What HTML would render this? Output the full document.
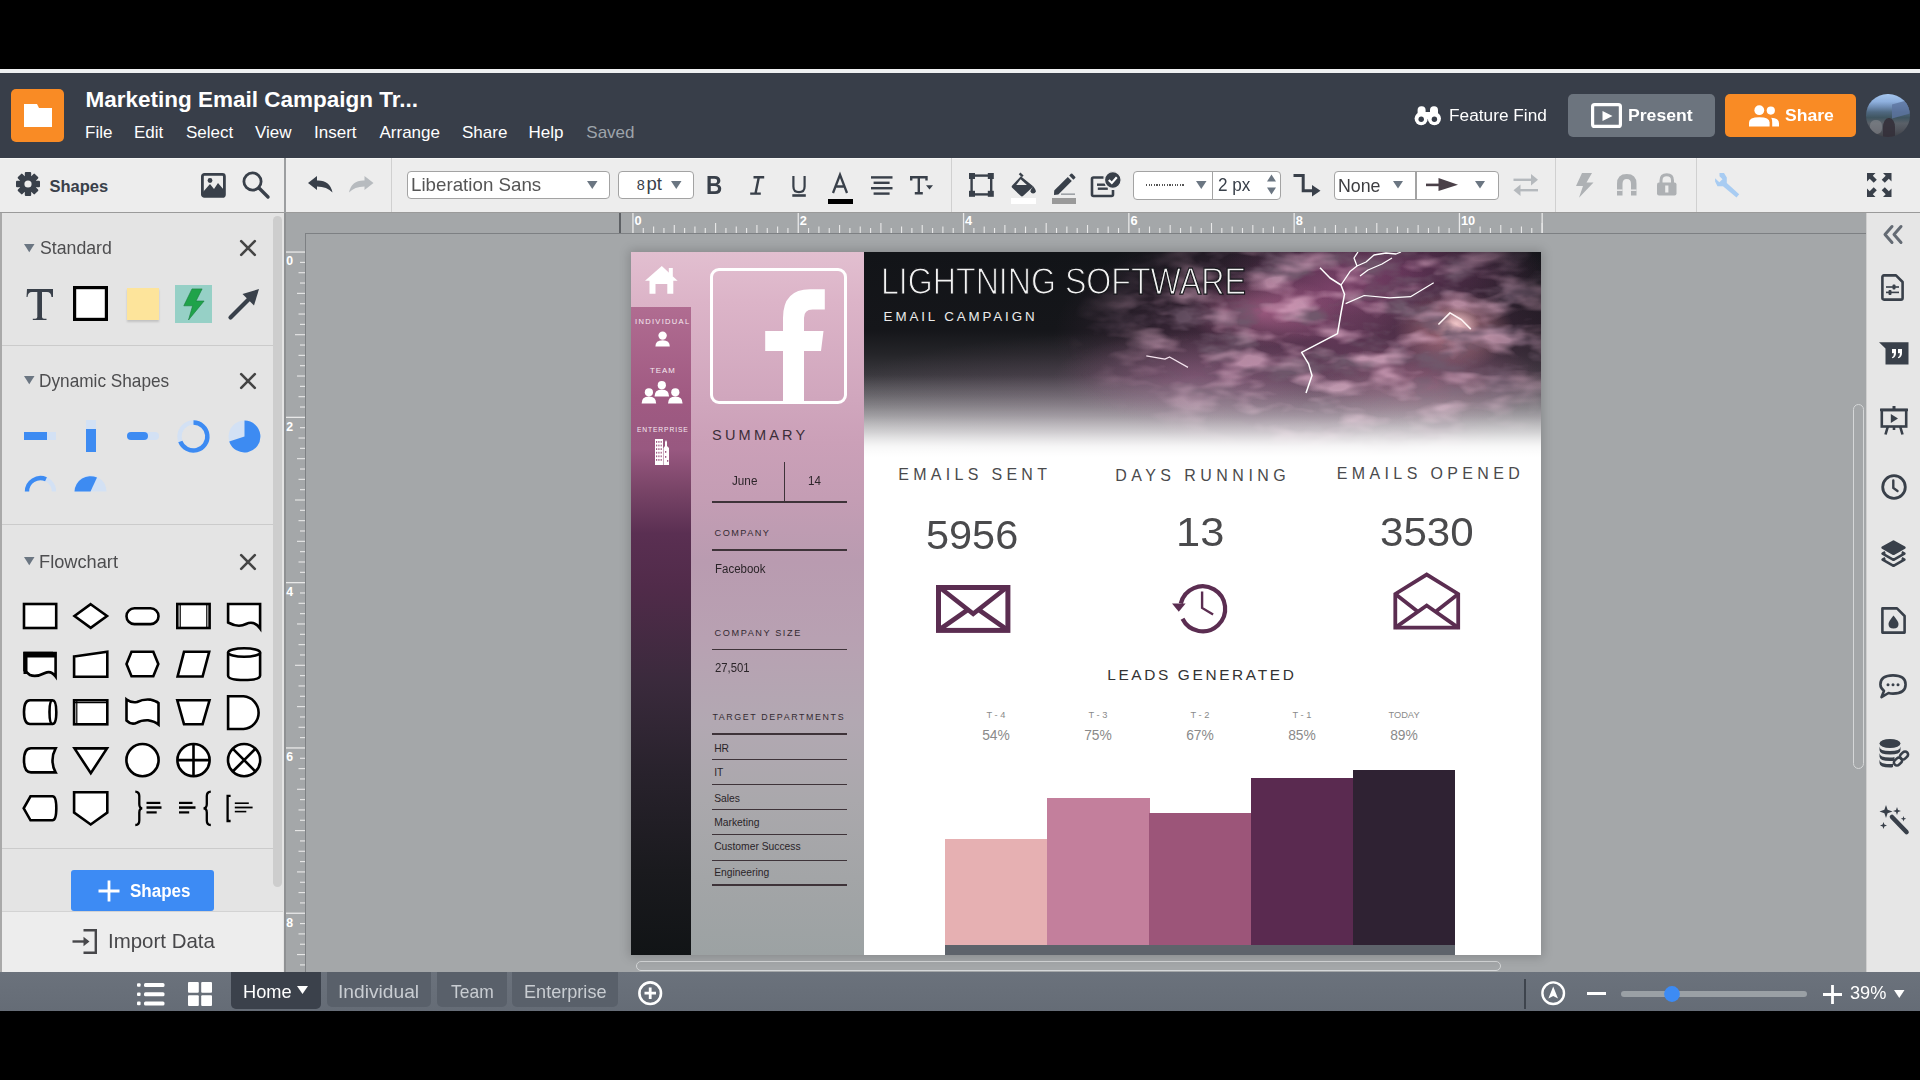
<!DOCTYPE html>
<html><head><meta charset="utf-8">
<style>
*{margin:0;padding:0;box-sizing:border-box}
html,body{width:1920px;height:1080px;overflow:hidden;background:#000;font-family:"Liberation Sans",sans-serif}
.a{position:absolute}
.t{position:absolute;white-space:nowrap;line-height:1}
svg{position:absolute;overflow:visible}
</style></head><body>
<!-- p_frame -->
<div class="a" style="left:0px;top:69px;width:1920px;height:4px;background:#eef0f1;"></div>
<div class="a" style="left:0px;top:73px;width:1920px;height:85px;background:#383e49;"></div>
<div class="a" style="left:0px;top:158px;width:1920px;height:55px;background:#ededed;border-top:1px solid #f6f6f6;border-bottom:1px solid #9a9a9a"></div>
<div class="a" style="left:0px;top:213px;width:285px;height:760px;background:#e4e4e4;border-left:2px solid #a9a9a9"></div>
<div class="a" style="left:284px;top:158px;width:2px;height:55px;background:#9c9ea0;"></div>
<div class="a" style="left:391px;top:158px;width:1px;height:54px;background:#d0d0d0;"></div>
<div class="a" style="left:951px;top:158px;width:1px;height:54px;background:#d0d0d0;"></div>
<div class="a" style="left:1555px;top:158px;width:1px;height:54px;background:#d0d0d0;"></div>
<div class="a" style="left:1696px;top:158px;width:1px;height:54px;background:#d0d0d0;"></div>
<div class="a" style="left:284px;top:213px;width:1582px;height:760px;background:#a4a7a9;border-left:2px solid #8f9193"></div>
<div class="a" style="left:1866px;top:213px;width:54px;height:760px;background:#e6e6e6;border-left:1px solid #cfcfcf"></div>
<div class="a" style="left:0px;top:972px;width:1920px;height:39px;background:linear-gradient(#6b727c,#656c76);"></div>
<!-- p_header -->
<div class="a" style="left:11px;top:89px;width:53px;height:53px;background:#f98b25;border-radius:5px"></div>
<svg style="left:24px;top:104px;" width="28" height="23" viewBox="0 0 28 23"><path d="M0 0H13L15 4H28V23H0Z" fill="#fff"/></svg>
<div class="t" style="left:85.50px;top:88.95px;font-size:22.5px;color:#fff;font-weight:bold;">Marketing Email Campaign Tr...</div>
<div class="t" style="left:85.00px;top:123.91px;font-size:17px;color:#fff;">File</div>
<div class="t" style="left:134.00px;top:123.91px;font-size:17px;color:#fff;">Edit</div>
<div class="t" style="left:186.00px;top:123.91px;font-size:17px;color:#fff;">Select</div>
<div class="t" style="left:255.00px;top:123.91px;font-size:17px;color:#fff;">View</div>
<div class="t" style="left:314.00px;top:123.91px;font-size:17px;color:#fff;">Insert</div>
<div class="t" style="left:379.50px;top:123.91px;font-size:17px;color:#fff;">Arrange</div>
<div class="t" style="left:462.00px;top:123.91px;font-size:17px;color:#fff;">Share</div>
<div class="t" style="left:528.50px;top:123.91px;font-size:17px;color:#fff;">Help</div>
<div class="t" style="left:586.30px;top:123.91px;font-size:17px;color:#9ea4ab;">Saved</div>
<svg style="left:1414px;top:106px;" width="28" height="20" viewBox="0 0 28 20"><g fill="#fff"><rect x="3.6" y="0.3" width="8" height="12" rx="3.8"/><rect x="16" y="0.3" width="8" height="12" rx="3.8"/><rect x="10" y="6" width="7.6" height="7"/>
<circle cx="7.2" cy="12.6" r="6.6"/><circle cx="20.4" cy="12.6" r="6.6"/></g>
<circle cx="7.2" cy="13.2" r="2.7" fill="#383e49"/><circle cx="20.4" cy="13.2" r="2.7" fill="#383e49"/></svg>
<div class="t" style="left:1449.42px;top:107.06px;font-size:17.3px;color:#fff;transform:scaleX(0.9991);transform-origin:left top;">Feature Find</div>
<div class="a" style="left:1568px;top:94px;width:147px;height:43px;background:#6c747e;border-radius:5px"></div>
<svg style="left:1591px;top:103px;" width="31" height="25" viewBox="0 0 31 25"><rect x="1.6" y="1.6" width="27.8" height="21.8" rx="2" fill="none" stroke="#fff" stroke-width="3.2"/><path d="M11.5 8V18L21.5 13Z" fill="#fff"/></svg>
<div class="t" style="left:1627.55px;top:107.06px;font-size:17.3px;color:#fff;font-weight:bold;transform:scaleX(1.0192);transform-origin:left top;">Present</div>
<div class="a" style="left:1725px;top:94px;width:131px;height:43px;background:#f98b25;border-radius:5px"></div>
<svg style="left:1749px;top:104px;" width="30" height="23" viewBox="0 0 30 23"><g fill="#fff"><circle cx="10.3" cy="6.2" r="4.9"/><path d="M0 22.5 V18.5 Q0 13.2 10.3 13.2 Q20.6 13.2 20.6 18.5 V22.5Z"/>
<circle cx="21.8" cy="6.6" r="4.1"/><path d="M22.3 13.8 Q30 14.3 30 19.2 V22.5 H23.2 V18.5 Q23.2 15.6 22.3 13.8Z"/></g></svg>
<div class="t" style="left:1784.97px;top:107.06px;font-size:17.3px;color:#fff;font-weight:bold;transform:scaleX(1.0177);transform-origin:left top;">Share</div>
<div class="a" style="left:1866px;top:93.5px;width:43.5px;height:43.5px;border-radius:50%;overflow:hidden;background:linear-gradient(#a6c6ee 0%,#8eb0de 18%,#6f8db4 30%,#4f6880 42%,#3f5560 55%,#5a6068 68%,#50545c 82%,#3e4046 100%)">
<div class="a" style="left:26px;top:8px;width:18px;height:14px;background:#5c74a0;opacity:.8;transform:skewY(-15deg)"></div>
<div class="a" style="left:4px;top:26px;width:12px;height:14px;border-radius:40%;background:#8a8d92;opacity:.55"></div>
<div class="a" style="left:17px;top:24px;width:12px;height:20px;border-radius:45% 45% 0 0;background:#34303a;opacity:.9"></div></div>
<!-- p_toolbar -->
<svg style="left:16px;top:172px;" width="24" height="24" viewBox="0 0 24 24"><g transform="translate(12 12)"><g fill="#39404a">
<rect x="-3.2" y="-12" width="6.4" height="24" rx="1"/>
<rect x="-3.2" y="-12" width="6.4" height="24" rx="1" transform="rotate(45)"/>
<rect x="-3.2" y="-12" width="6.4" height="24" rx="1" transform="rotate(90)"/>
<rect x="-3.2" y="-12" width="6.4" height="24" rx="1" transform="rotate(135)"/>
<circle r="8.6"/></g><circle r="3.6" fill="#ededed"/></g></svg>
<div class="t" style="left:49.50px;top:177.73px;font-size:16.5px;color:#39404a;font-weight:bold;">Shapes</div>
<svg style="left:201px;top:172.5px;" width="25" height="25" viewBox="0 0 25 25"><rect x="1.4" y="1.4" width="22" height="22" rx="2" fill="none" stroke="#39404a" stroke-width="2.8"/><circle cx="9" cy="7.5" r="2.4" fill="#39404a"/><path d="M2 23 L2 19 L9 11 L13 16 L17 10 L23 17 L23 23Z" fill="#39404a"/></svg>
<svg style="left:242px;top:171px;" width="28" height="28" viewBox="0 0 28 28"><circle cx="10.5" cy="10.5" r="8.6" fill="none" stroke="#39404a" stroke-width="2.8"/><path d="M17 17 L26 26" stroke="#39404a" stroke-width="3.4" stroke-linecap="round"/></svg>
<svg style="left:308px;top:176px;" width="25" height="17" viewBox="0 0 25 17"><path d="M0 7 L9 0 V4.5 Q22 4 24.5 16.5 Q19 10.5 9 10.5 V14 Z" fill="#39404a"/></svg>
<svg style="left:349px;top:176px;" width="25" height="17" viewBox="0 0 25 17"><path d="M24.5 7 L15.5 0 V4.5 Q2.5 4 0 16.5 Q5.5 10.5 15.5 10.5 V14 Z" fill="#b7bbbf"/></svg>
<div class="a" style="left:407px;top:171px;width:203px;height:28px;background:#fff;border:1.5px solid #a3a3a3;border-radius:4px"></div>
<div class="t" style="left:411.00px;top:174.72px;font-size:19px;color:#555;transform:scaleX(0.9864);transform-origin:left top;">Liberation Sans</div>
<svg style="left:586.5px;top:181px;" width="11" height="8" viewBox="0 0 11 8"><path d="M0 0H10.5L5.25 8Z" fill="#6b7682"/></svg>
<div class="a" style="left:618px;top:171px;width:76px;height:28px;background:#fff;border:1.5px solid #a3a3a3;border-radius:4px"></div>
<div class="t" style="left:636.80px;top:178.03px;font-size:14.5px;color:#39404a;">8</div>
<div class="t" style="left:646.50px;top:174.64px;font-size:18.5px;color:#39404a;">pt</div>
<svg style="left:671px;top:181px;" width="10.5" height="8" viewBox="0 0 10.5 8"><path d="M0 0H10.5L5.25 8Z" fill="#6b7682"/></svg>
<div class="t" style="left:706.00px;top:172.94px;font-size:25px;color:#39404a;font-weight:bold;transform:scaleX(0.9);transform-origin:left top;">B</div>
<svg style="left:750px;top:175.8px;" width="15" height="19" viewBox="0 0 15 19"><path d="M3.5 1.2H14.2M0.2 17.6H10.8M8.8 1.2 L5.5 17.6" stroke="#39404a" stroke-width="2.4" fill="none"/></svg>
<svg style="left:791.5px;top:176px;" width="15" height="21" viewBox="0 0 15 21"><path d="M1.4 0 V10.5 Q1.4 16.2 7 16.2 Q12.6 16.2 12.6 10.5 V0" stroke="#39404a" stroke-width="2.2" fill="none"/><rect x="0.3" y="18.2" width="13.5" height="2.6" fill="#39404a"/></svg>
<svg style="left:831.5px;top:174.2px;" width="17" height="19" viewBox="0 0 17 19"><path d="M1 19 L8 0.8 L15 19 M3.8 12.5 H12.2" stroke="#39404a" stroke-width="2.3" fill="none"/></svg>
<div class="a" style="left:828px;top:198.6px;width:24.5px;height:5px;background:#000;"></div>
<svg style="left:870.5px;top:175.5px;" width="22" height="19" viewBox="0 0 22 19"><g fill="#39404a"><rect x="0" y="0.2" width="21.5" height="2.4"/><rect x="2.6" y="5.6" width="16" height="2.4"/><rect x="0" y="11" width="21.5" height="2.4"/><rect x="2.6" y="16.4" width="16" height="2.4"/></g></svg>
<svg style="left:909.5px;top:175.8px;" width="24" height="19" viewBox="0 0 24 19"><path d="M1.2 1.2 H16.5 M1.2 0 V4.5 M16.5 0 V4.5 M8.8 1.2 V17.2 M4.8 17.2 H12.8" stroke="#39404a" stroke-width="2.4" fill="none"/><path d="M16 9.2 H23 L19.5 13.6Z" fill="#39404a"/></svg>
<svg style="left:969px;top:173px;" width="25" height="24" viewBox="0 0 25 24"><rect x="2.6" y="2.6" width="19.6" height="18.8" fill="none" stroke="#39404a" stroke-width="2.4"/><g fill="#39404a"><rect x="0" y="0" width="6" height="6"/><rect x="18.8" y="0" width="6" height="6"/><rect x="0" y="17.8" width="6" height="6"/><rect x="18.8" y="17.8" width="6" height="6"/></g></svg>
<svg style="left:1010.5px;top:173px;" width="26" height="24" viewBox="0 0 26 24"><path d="M9.8 3.2 L21.5 12.8 Q22.3 13.5 21.5 14.3 L12.3 22.8 Q11 24 9.6 22.8 L1.2 14.8 Q0.1 13.6 1.2 12.5 Z" fill="#39404a"/><path d="M8.6 0.4 L11.8 3.4" stroke="#39404a" stroke-width="2.4"/><path d="M5.2 12 L9.6 6.3 L15.9 12Z" fill="#ededed"/><path d="M22.1 13.2 Q25.2 17.2 24.8 18.6 Q24.2 20.6 22.1 20.6 Q20 20.6 19.5 18.6 Q19.2 17.2 22.1 13.2Z" fill="#39404a"/></svg>
<div class="a" style="left:1011px;top:198.2px;width:24.5px;height:5.6px;background:#fff;"></div>
<svg style="left:1052.5px;top:173.5px;" width="24" height="22" viewBox="0 0 24 22"><path d="M1 21 L1.2 16.5 L14.8 2.9 L18.8 6.9 L5.3 20.5 Z" fill="#39404a"/><path d="M16.2 1.5 L17.9 -0.2 Q18.6 -0.8 19.3 -0.2 L22.2 2.7 Q22.8 3.4 22.2 4.1 L20.4 5.8 Z" fill="#39404a"/><rect x="8" y="19.5" width="14" height="1.3" fill="#8a8f95"/></svg>
<div class="a" style="left:1052px;top:198.2px;width:24px;height:5.6px;background:#9a9a9a;"></div>
<svg style="left:1090.5px;top:171px;" width="31" height="27" viewBox="0 0 31 27"><path d="M12.5 6.5 H2.5 Q1 6.5 1 8 V23.5 Q1 25 2.5 25 H20.5 Q22 25 22 23.5 V19" fill="none" stroke="#39404a" stroke-width="2.6"/><rect x="6" y="12.5" width="8.5" height="2.4" fill="#39404a"/><rect x="6.8" y="16.5" width="10" height="2.4" fill="#39404a"/><circle cx="21.8" cy="9" r="8.4" fill="#39404a" stroke="#ededed" stroke-width="1.4"/><path d="M17.8 9 L20.8 12 L25.8 6.2" stroke="#fff" stroke-width="2.2" fill="none"/></svg>
<div class="a" style="left:1132.5px;top:170.5px;width:148px;height:29px;background:#fff;border:1.5px solid #a3a3a3;border-radius:4px"></div>
<div class="a" style="left:1211.5px;top:171px;width:1px;height:28px;background:#a3a3a3;"></div>
<div class="a" style="left:1146px;top:184px;width:38.5px;height:2px;background:repeating-linear-gradient(90deg,#555 0 1.2px,transparent 1.2px 2.6px);"></div>
<svg style="left:1196px;top:181px;" width="10.5" height="8" viewBox="0 0 10.5 8"><path d="M0 0H10.5L5.25 8Z" fill="#6b7682"/></svg>
<div class="t" style="left:1218.14px;top:175.74px;font-size:18.5px;color:#39404a;transform:scaleX(0.9275);transform-origin:left top;">2 px</div>
<svg style="left:1266.5px;top:174px;" width="9" height="21" viewBox="0 0 9 21"><path d="M0 7.5H9L4.5 0.5Z M0 13.5H9L4.5 20.5Z" fill="#6b7682"/></svg>
<svg style="left:1293px;top:173.5px;" width="29" height="23" viewBox="0 0 29 23"><path d="M0.5 1.6 H10.2 V16.8 H20" fill="none" stroke="#39404a" stroke-width="3"/><path d="M19 11 L27.5 16.8 L19 22.5Z" fill="#39404a"/></svg>
<div class="a" style="left:1334px;top:171px;width:164.5px;height:28.5px;background:#fff;border:1.5px solid #a3a3a3;border-radius:4px"></div>
<div class="a" style="left:1415px;top:171px;width:1.5px;height:28.5px;background:#a3a3a3;"></div>
<div class="t" style="left:1338.38px;top:177.53px;font-size:17.8px;color:#3d3d40;transform:scaleX(0.9996);transform-origin:left top;">None</div>
<svg style="left:1392.5px;top:181.2px;" width="10" height="7.5" viewBox="0 0 10 7.5"><path d="M0 0H10L5 7.5Z" fill="#6b7682"/></svg>
<svg style="left:1425.5px;top:178.4px;" width="33" height="13" viewBox="0 0 33 13"><rect x="0" y="5.6" width="16" height="2.6" fill="#4a4048"/><path d="M12.5 0 L32 6.7 L12.5 13 Z" fill="#4a4048"/></svg>
<svg style="left:1474.8px;top:181.2px;" width="10" height="7.5" viewBox="0 0 10 7.5"><path d="M0 0H10L5 7.5Z" fill="#6b7682"/></svg>
<svg style="left:1512.5px;top:174px;" width="26" height="22" viewBox="0 0 26 22"><g fill="#b5b9bd"><rect x="0.5" y="4.6" width="20" height="2.4"/><path d="M18 0 L25 5.8 L18 11.6Z"/><rect x="4.5" y="15" width="20.5" height="2.4"/><path d="M7.5 10.4 L0.5 16.2 L7.5 22Z"/></g></svg>
<svg style="left:1576px;top:173px;" width="18" height="25" viewBox="0 0 18 25"><path d="M6 0 H16 L10.5 9.5 H17.5 L3 24.8 L7 13 H0 Z" fill="#aeb1b4"/></svg>
<svg style="left:1617px;top:174px;" width="19.5" height="22" viewBox="0 0 19.5 22"><path d="M0 9.8 Q0 0 9.75 0 Q19.5 0 19.5 9.8 V21.5 H14 V10 Q14 5 9.75 5 Q5.5 5 5.5 10 V21.5 H0 Z" fill="#aeb1b4"/><rect x="0" y="15.5" width="5.5" height="1.4" fill="#ededed"/><rect x="14" y="15.5" width="5.5" height="1.4" fill="#ededed"/></svg>
<svg style="left:1657px;top:174px;" width="19.5" height="22" viewBox="0 0 19.5 22"><path d="M4 9 V6.5 Q4 0.8 9.75 0.8 Q15.5 0.8 15.5 6.5 V9" fill="none" stroke="#aeb1b4" stroke-width="3"/><rect x="0" y="8.5" width="19.5" height="13" rx="2" fill="#aeb1b4"/><rect x="8.2" y="11.5" width="3.2" height="7" fill="#ededed"/></svg>
<svg style="left:1713.5px;top:173px;" width="26" height="25" viewBox="0 0 26 25"><path d="M5.5 0.0 L10.0 0.0 L12.8 4.5 L12.8 10.0 L25.2 21.2 L22.5 24.5 L9.0 13.3 L3.5 13.3 L1.1 8.5 L1.1 5.3 L5.3 9.3 L8.5 6.3 L5.5 3.2Z" fill="#a8ccf2"/></svg>
<svg style="left:1866.5px;top:173px;" width="24.5" height="24" viewBox="0 0 24.5 24"><g fill="#39404a"><path d="M0 0 H8.5 L5.8 2.7 L9.8 6.7 L6.7 9.8 L2.7 5.8 L0 8.5Z"/>
<path d="M24.5 0 H16 L18.7 2.7 L14.7 6.7 L17.8 9.8 L21.8 5.8 L24.5 8.5Z"/>
<path d="M0 24 H8.5 L5.8 21.3 L9.8 17.3 L6.7 14.2 L2.7 18.2 L0 15.5Z"/>
<path d="M24.5 24 H16 L18.7 21.3 L14.7 17.3 L17.8 14.2 L21.8 18.2 L24.5 15.5Z"/></g></svg>
<!-- p_left -->
<div class="a" style="left:273px;top:216px;width:9px;height:671px;background:#cdcdcd;border-radius:4.5px"></div>
<svg style="left:24px;top:243.5px;" width="11" height="8.5" viewBox="0 0 11 8.5"><path d="M0 0H10.5L5.25 8.2Z" fill="#6b7682"/></svg>
<div class="t" style="left:39.80px;top:240.33px;font-size:17.8px;color:#4d4d4f;transform:scaleX(0.9956);transform-origin:left top;">Standard</div>
<svg style="left:240px;top:240.20000000000002px;" width="16" height="16" viewBox="0 0 16 16"><path d="M1.2 1.2 L14.8 14.8 M14.8 1.2 L1.2 14.8" stroke="#444" stroke-width="2.6" stroke-linecap="round"/></svg>
<svg style="left:26px;top:287.5px;" width="28" height="33" viewBox="0 0 28 33"><path d="M1 1 H27 V9 H25.5 Q25 4 21 4 H16 V29 Q16 30.8 18 30.8 H20.5 V32 H6.8 V30.8 H9.3 Q11.3 30.8 11.3 29 V4 H6 Q2 4 1.5 9 H0.5Z" fill="#39404a"/></svg>
<svg style="left:73px;top:286px;" width="35" height="35" viewBox="0 0 35 35"><rect x="1.6" y="1.6" width="31.8" height="31.8" fill="#fff" stroke="#000" stroke-width="3.2"/></svg>
<div class="a" style="left:127px;top:288px;width:32px;height:32px;background:#fde49b;box-shadow:0 2px 2px rgba(0,0,0,.15)"></div>
<div class="a" style="left:174.5px;top:285px;width:37.5px;height:38px;background:#96d0c6;"></div>
<svg style="left:174.5px;top:285px;" width="37.5" height="38" viewBox="0 0 37.5 38"><path d="M17 3.9 H27.1 L21 16 H29.1 L13.5 35 L17.6 20.8 H8.8 Z" fill="#1fa34a" stroke="#177c3c" stroke-width="0.6"/></svg>
<svg style="left:228px;top:288px;" width="32" height="32" viewBox="0 0 32 32"><path d="M2.5 29.5 L21 11" stroke="#39404a" stroke-width="4.2" stroke-linecap="round"/><path d="M31 1 L14.5 6 L26 17.5Z" fill="#39404a"/></svg>
<div class="a" style="left:2px;top:345px;width:271px;height:1px;background:#cbcbcb;"></div>
<svg style="left:24px;top:375.5px;" width="11" height="8.5" viewBox="0 0 11 8.5"><path d="M0 0H10.5L5.25 8.2Z" fill="#6b7682"/></svg>
<div class="t" style="left:39.22px;top:372.93px;font-size:17.8px;color:#4d4d4f;transform:scaleX(0.9689);transform-origin:left top;">Dynamic Shapes</div>
<svg style="left:240px;top:372.8px;" width="16" height="16" viewBox="0 0 16 16"><path d="M1.2 1.2 L14.8 14.8 M14.8 1.2 L1.2 14.8" stroke="#444" stroke-width="2.6" stroke-linecap="round"/></svg>
<div class="a" style="left:23.7px;top:432px;width:23px;height:8px;background:#3d8bf2;"></div>
<div class="a" style="left:46.7px;top:432px;width:9.6px;height:8px;background:#d3e1f4;"></div>
<div class="a" style="left:86px;top:420px;width:9.5px;height:9px;background:#d3e1f4;"></div>
<div class="a" style="left:86px;top:429px;width:9.5px;height:22.6px;background:#3d8bf2;"></div>
<svg style="left:127px;top:432px;" width="32" height="8" viewBox="0 0 32 8"><rect x="0" y="0" width="32" height="8" rx="4" fill="#d3e1f4"/><rect x="0" y="0" width="21" height="8" rx="4" fill="#3d8bf2"/></svg>
<svg style="left:177px;top:420px;" width="33" height="33" viewBox="0 0 33 33"><circle cx="16.5" cy="16.5" r="14" fill="none" stroke="#d3e1f4" stroke-width="4.4"/><path d="M16.5 2.5 A14 14 0 1 1 3.3 21.5" fill="none" stroke="#3d8bf2" stroke-width="4.4"/></svg>
<svg style="left:228px;top:420px;" width="33" height="33" viewBox="0 0 33 33"><circle cx="16.5" cy="16.5" r="16" fill="#d3e1f4"/><path d="M16.5 16.5 V0.5 A16 16 0 1 1 1.2 21.5Z" fill="#3d8bf2"/></svg>
<svg style="left:23.7px;top:476px;" width="33" height="16" viewBox="0 0 33 16"><path d="M3 15.5 A13.5 13.5 0 0 1 30 15.5" fill="none" stroke="#d3e1f4" stroke-width="4.4"/><path d="M3 15.5 A13.5 13.5 0 0 1 22 3.3" fill="none" stroke="#3d8bf2" stroke-width="4.4"/></svg>
<svg style="left:74px;top:476px;" width="33" height="16" viewBox="0 0 33 16"><path d="M0.5 15.5 A16 16 0 0 1 32.5 15.5Z" fill="#d3e1f4"/><path d="M0.5 15.5 A16 16 0 0 1 23 1.6 L16.5 15.5Z" fill="#3d8bf2"/></svg>
<div class="a" style="left:2px;top:524px;width:271px;height:1px;background:#cbcbcb;"></div>
<svg style="left:24px;top:556.5px;" width="11" height="8.5" viewBox="0 0 11 8.5"><path d="M0 0H10.5L5.25 8.2Z" fill="#6b7682"/></svg>
<div class="t" style="left:39.14px;top:553.93px;font-size:17.8px;color:#4d4d4f;transform:scaleX(1.0243);transform-origin:left top;">Flowchart</div>
<svg style="left:240px;top:553.8px;" width="16" height="16" viewBox="0 0 16 16"><path d="M1.2 1.2 L14.8 14.8 M14.8 1.2 L1.2 14.8" stroke="#444" stroke-width="2.6" stroke-linecap="round"/></svg>
<svg style="left:0;top:0" width="300" height="900" viewBox="0 0 300 900"><g fill="#fff" stroke="#000" stroke-width="2.6" stroke-linejoin="miter"><rect x="24" y="604" width="32.2" height="24"/><path d="M90.7 604.2 L107 616 L90.7 627.8 L74.5 616Z"/><rect x="126.5" y="608.3" width="32" height="15.8" rx="7.9"/><rect x="177.3" y="604" width="32.3" height="24"/><path d="M180.2 604 V628 M206.8 604 V628" stroke-width="1.2"/><path d="M228.1 604 H260.1 V628.5 Q254 620 246 624 Q238 628 228.1 622.5Z"/><path d="M24.5 653 H55.6 V676.5 Q51 670 45 673 Q36 677.5 30 675 L24.5 670.5Z"/><path d="M23.5 651.8 H53 L56 655 V657.5 H27.5 V674 H23.5Z" fill="#000" stroke="none"/><path d="M74.1 656.5 L107.3 651.8 V676.7 H74.1Z"/><path d="M131.5 651.8 H153.3 L158.3 664 L153.3 676.3 H131.5 L126.5 664Z"/><path d="M184 651.8 H209.2 L202.6 676.5 H177.6Z"/><path d="M228.1 652.5 V675.5 Q228.1 680 244.1 680 Q260.1 680 260.1 675.5 V652.5"/><ellipse cx="244.1" cy="652.5" rx="16" ry="4.3"/><path d="M30 700.2 H52.5 Q56.3 700.2 56.3 712 Q56.3 724 52.5 724 H30 Q24 724 24 712 Q24 700.2 30 700.2Z"/><path d="M52.5 700.2 Q49.5 700.2 49.5 712 Q49.5 724 52.5 724" fill="none"/><rect x="74.1" y="700.3" width="33.2" height="24"/><path d="M76.8 700.3 V724 M74.1 702.6 H107.3" stroke-width="1.2" fill="none"/><path d="M126.5 699.5 Q131 703 137 702 Q143 699 150 699.6 Q156 701 158.5 703 V724.5 Q155 721.5 148 720.2 Q141 720 137 722.6 Q131.5 725.5 126.5 720.5Z"/><path d="M177.3 700.3 H209.5 L202.6 724.2 H184Z"/><path d="M228.1 696.3 H243.5 A16.4 16.4 0 0 1 243.5 729 H228.1Z"/><path d="M31 748.3 H55.6 Q52.5 754 52.5 760.3 Q52.5 767 55.6 772.4 H31 Q24 772.4 24 760.3 Q24 748.3 31 748.3Z"/><path d="M74.5 748.4 H107 L90.8 773.2Z"/><circle cx="142.5" cy="760.1" r="16.1"/><circle cx="193.5" cy="760.1" r="16.1"/><path d="M193.5 744 V776.2 M177.4 760.1 H209.6" fill="none"/><circle cx="244.1" cy="760.1" r="16.1"/><path d="M232.7 748.7 L255.5 771.5 M255.5 748.7 L232.7 771.5" fill="none"/><path d="M30.5 796.3 H52.5 Q56.3 796.3 56.3 808.3 Q56.3 820.3 52.5 820.3 H30.5 L23.7 808.3Z"/><path d="M74.1 792.3 H107.3 V812.5 L90.7 824.5 L74.1 812.5Z"/></g><g fill="none" stroke="#000" stroke-width="2.3"><path d="M135.3 791.6 Q139.3 791.8 139.3 796 V804 Q139.3 808.3 142.3 808.3 Q139.3 808.3 139.3 812.6 V820.5 Q139.3 825 135.3 825"/><path d="M210.8 791.6 Q206.8 791.8 206.8 796 V804 Q206.8 808.3 203.5 808.3 Q206.8 808.3 206.8 812.6 V820.5 Q206.8 825 210.8 825"/><path d="M230.6 795.8 H227.6 V821 H230.6"/></g><g fill="#000"><rect x="146.5" y="801.8" width="13.8" height="2.2"/><rect x="146.5" y="806.3" width="15" height="2.5"/><rect x="146.5" y="811.3" width="10.2" height="2.2"/><rect x="179" y="801.8" width="13.5" height="2.2"/><rect x="179" y="806.3" width="16.5" height="2.5"/><rect x="179" y="811.3" width="10.2" height="2.2"/><rect x="234.8" y="802.4" width="14" height="1.6"/><rect x="234.8" y="806.6" width="17.8" height="1.8"/><rect x="234.8" y="810.8" width="11.5" height="1.6"/></g></svg>
<div class="a" style="left:2px;top:848px;width:271px;height:1px;background:#cbcbcb;"></div>
<div class="a" style="left:71px;top:870px;width:142.5px;height:40.5px;background:#3d8bf4;border-radius:3px"></div>
<svg style="left:98px;top:880px;" width="22" height="22" viewBox="0 0 22 22"><path d="M11 0.5 V21.5 M0.5 11 H21.5" stroke="#fff" stroke-width="2.8"/></svg>
<div class="t" style="left:130.49px;top:882.69px;font-size:17.5px;color:#fff;font-weight:bold;transform:scaleX(0.9723);transform-origin:left top;">Shapes</div>
<div class="a" style="left:2px;top:911px;width:281px;height:61px;background:#ededed;border-top:1px solid #d3d3d3"></div>
<svg style="left:71.5px;top:929px;" width="26" height="25" viewBox="0 0 26 25"><path d="M11.5 1.2 H23.8 V23.8 H11.5" fill="none" stroke="#47474a" stroke-width="2.4"/><path d="M0.5 12.5 H16" stroke="#47474a" stroke-width="2.4"/><path d="M11.5 7.8 L17.5 12.5 L11.5 17.2Z" fill="#47474a"/></svg>
<div class="t" style="left:107.56px;top:930.22px;font-size:21px;color:#47474a;transform:scaleX(0.9737);transform-origin:left top;">Import Data</div>
<!-- p_canvas -->
<div class="a" style="left:305px;top:232.5px;width:1561px;height:1.5px;background:#7d8083;"></div>
<div class="a" style="left:304.5px;top:233px;width:1.5px;height:740px;background:#7d8083;"></div>
<div class="a" style="left:619px;top:213px;width:1.6px;height:20px;background:#5d6064;"></div>
<svg style="left:0;top:0" width="1920" height="1080" viewBox="0 0 1920 1080"><rect x="632.30" y="213" width="1.3" height="20" fill="#e8e8e8"/><rect x="642.73" y="228" width="1.1" height="5" fill="#e8e8e8"/><rect x="653.06" y="226.5" width="1.1" height="6.5" fill="#e8e8e8"/><rect x="663.39" y="228" width="1.1" height="5" fill="#e8e8e8"/><rect x="673.73" y="225" width="1.1" height="8" fill="#e8e8e8"/><rect x="684.06" y="228" width="1.1" height="5" fill="#e8e8e8"/><rect x="694.39" y="226.5" width="1.1" height="6.5" fill="#e8e8e8"/><rect x="704.72" y="228" width="1.1" height="5" fill="#e8e8e8"/><rect x="715.05" y="223" width="1.1" height="10" fill="#e8e8e8"/><rect x="725.38" y="228" width="1.1" height="5" fill="#e8e8e8"/><rect x="735.71" y="226.5" width="1.1" height="6.5" fill="#e8e8e8"/><rect x="746.04" y="228" width="1.1" height="5" fill="#e8e8e8"/><rect x="756.38" y="225" width="1.1" height="8" fill="#e8e8e8"/><rect x="766.71" y="228" width="1.1" height="5" fill="#e8e8e8"/><rect x="777.04" y="226.5" width="1.1" height="6.5" fill="#e8e8e8"/><rect x="787.37" y="228" width="1.1" height="5" fill="#e8e8e8"/><rect x="797.60" y="213" width="1.3" height="20" fill="#e8e8e8"/><rect x="808.03" y="228" width="1.1" height="5" fill="#e8e8e8"/><rect x="818.36" y="226.5" width="1.1" height="6.5" fill="#e8e8e8"/><rect x="828.69" y="228" width="1.1" height="5" fill="#e8e8e8"/><rect x="839.02" y="225" width="1.1" height="8" fill="#e8e8e8"/><rect x="849.36" y="228" width="1.1" height="5" fill="#e8e8e8"/><rect x="859.69" y="226.5" width="1.1" height="6.5" fill="#e8e8e8"/><rect x="870.02" y="228" width="1.1" height="5" fill="#e8e8e8"/><rect x="880.35" y="223" width="1.1" height="10" fill="#e8e8e8"/><rect x="890.68" y="228" width="1.1" height="5" fill="#e8e8e8"/><rect x="901.01" y="226.5" width="1.1" height="6.5" fill="#e8e8e8"/><rect x="911.34" y="228" width="1.1" height="5" fill="#e8e8e8"/><rect x="921.67" y="225" width="1.1" height="8" fill="#e8e8e8"/><rect x="932.01" y="228" width="1.1" height="5" fill="#e8e8e8"/><rect x="942.34" y="226.5" width="1.1" height="6.5" fill="#e8e8e8"/><rect x="952.67" y="228" width="1.1" height="5" fill="#e8e8e8"/><rect x="962.90" y="213" width="1.3" height="20" fill="#e8e8e8"/><rect x="973.33" y="228" width="1.1" height="5" fill="#e8e8e8"/><rect x="983.66" y="226.5" width="1.1" height="6.5" fill="#e8e8e8"/><rect x="993.99" y="228" width="1.1" height="5" fill="#e8e8e8"/><rect x="1004.33" y="225" width="1.1" height="8" fill="#e8e8e8"/><rect x="1014.66" y="228" width="1.1" height="5" fill="#e8e8e8"/><rect x="1024.99" y="226.5" width="1.1" height="6.5" fill="#e8e8e8"/><rect x="1035.32" y="228" width="1.1" height="5" fill="#e8e8e8"/><rect x="1045.65" y="223" width="1.1" height="10" fill="#e8e8e8"/><rect x="1055.98" y="228" width="1.1" height="5" fill="#e8e8e8"/><rect x="1066.31" y="226.5" width="1.1" height="6.5" fill="#e8e8e8"/><rect x="1076.64" y="228" width="1.1" height="5" fill="#e8e8e8"/><rect x="1086.97" y="225" width="1.1" height="8" fill="#e8e8e8"/><rect x="1097.31" y="228" width="1.1" height="5" fill="#e8e8e8"/><rect x="1107.64" y="226.5" width="1.1" height="6.5" fill="#e8e8e8"/><rect x="1117.97" y="228" width="1.1" height="5" fill="#e8e8e8"/><rect x="1128.20" y="213" width="1.3" height="20" fill="#e8e8e8"/><rect x="1138.63" y="228" width="1.1" height="5" fill="#e8e8e8"/><rect x="1148.96" y="226.5" width="1.1" height="6.5" fill="#e8e8e8"/><rect x="1159.29" y="228" width="1.1" height="5" fill="#e8e8e8"/><rect x="1169.62" y="225" width="1.1" height="8" fill="#e8e8e8"/><rect x="1179.96" y="228" width="1.1" height="5" fill="#e8e8e8"/><rect x="1190.29" y="226.5" width="1.1" height="6.5" fill="#e8e8e8"/><rect x="1200.62" y="228" width="1.1" height="5" fill="#e8e8e8"/><rect x="1210.95" y="223" width="1.1" height="10" fill="#e8e8e8"/><rect x="1221.28" y="228" width="1.1" height="5" fill="#e8e8e8"/><rect x="1231.61" y="226.5" width="1.1" height="6.5" fill="#e8e8e8"/><rect x="1241.94" y="228" width="1.1" height="5" fill="#e8e8e8"/><rect x="1252.28" y="225" width="1.1" height="8" fill="#e8e8e8"/><rect x="1262.61" y="228" width="1.1" height="5" fill="#e8e8e8"/><rect x="1272.94" y="226.5" width="1.1" height="6.5" fill="#e8e8e8"/><rect x="1283.27" y="228" width="1.1" height="5" fill="#e8e8e8"/><rect x="1293.50" y="213" width="1.3" height="20" fill="#e8e8e8"/><rect x="1303.93" y="228" width="1.1" height="5" fill="#e8e8e8"/><rect x="1314.26" y="226.5" width="1.1" height="6.5" fill="#e8e8e8"/><rect x="1324.59" y="228" width="1.1" height="5" fill="#e8e8e8"/><rect x="1334.93" y="225" width="1.1" height="8" fill="#e8e8e8"/><rect x="1345.26" y="228" width="1.1" height="5" fill="#e8e8e8"/><rect x="1355.59" y="226.5" width="1.1" height="6.5" fill="#e8e8e8"/><rect x="1365.92" y="228" width="1.1" height="5" fill="#e8e8e8"/><rect x="1376.25" y="223" width="1.1" height="10" fill="#e8e8e8"/><rect x="1386.58" y="228" width="1.1" height="5" fill="#e8e8e8"/><rect x="1396.91" y="226.5" width="1.1" height="6.5" fill="#e8e8e8"/><rect x="1407.24" y="228" width="1.1" height="5" fill="#e8e8e8"/><rect x="1417.58" y="225" width="1.1" height="8" fill="#e8e8e8"/><rect x="1427.91" y="228" width="1.1" height="5" fill="#e8e8e8"/><rect x="1438.24" y="226.5" width="1.1" height="6.5" fill="#e8e8e8"/><rect x="1448.57" y="228" width="1.1" height="5" fill="#e8e8e8"/><rect x="1458.80" y="213" width="1.3" height="20" fill="#e8e8e8"/><rect x="1469.23" y="228" width="1.1" height="5" fill="#e8e8e8"/><rect x="1479.56" y="226.5" width="1.1" height="6.5" fill="#e8e8e8"/><rect x="1489.89" y="228" width="1.1" height="5" fill="#e8e8e8"/><rect x="1500.22" y="225" width="1.1" height="8" fill="#e8e8e8"/><rect x="1510.56" y="228" width="1.1" height="5" fill="#e8e8e8"/><rect x="1520.89" y="226.5" width="1.1" height="6.5" fill="#e8e8e8"/><rect x="1531.22" y="228" width="1.1" height="5" fill="#e8e8e8"/><rect x="1541.55" y="223" width="1.1" height="10" fill="#e8e8e8"/><rect x="1541.5" y="213" width="1.3" height="20" fill="#e8e8e8"/><text x="634.50" y="224.7" font-size="12.8" font-weight="bold" fill="#fff" font-family="Liberation Sans">0</text><text x="799.80" y="224.7" font-size="12.8" font-weight="bold" fill="#fff" font-family="Liberation Sans">2</text><text x="965.10" y="224.7" font-size="12.8" font-weight="bold" fill="#fff" font-family="Liberation Sans">4</text><text x="1130.40" y="224.7" font-size="12.8" font-weight="bold" fill="#fff" font-family="Liberation Sans">6</text><text x="1295.70" y="224.7" font-size="12.8" font-weight="bold" fill="#fff" font-family="Liberation Sans">8</text><text x="1461.00" y="224.7" font-size="12.8" font-weight="bold" fill="#fff" font-family="Liberation Sans">10</text><rect x="286" y="251.40" width="19" height="1.3" fill="#e8e8e8"/><rect x="300" y="261.83" width="5" height="1.1" fill="#e8e8e8"/><rect x="298.5" y="272.16" width="6.5" height="1.1" fill="#e8e8e8"/><rect x="300" y="282.49" width="5" height="1.1" fill="#e8e8e8"/><rect x="297" y="292.82" width="8" height="1.1" fill="#e8e8e8"/><rect x="300" y="303.16" width="5" height="1.1" fill="#e8e8e8"/><rect x="298.5" y="313.49" width="6.5" height="1.1" fill="#e8e8e8"/><rect x="300" y="323.82" width="5" height="1.1" fill="#e8e8e8"/><rect x="295" y="334.15" width="10" height="1.1" fill="#e8e8e8"/><rect x="300" y="344.48" width="5" height="1.1" fill="#e8e8e8"/><rect x="298.5" y="354.81" width="6.5" height="1.1" fill="#e8e8e8"/><rect x="300" y="365.14" width="5" height="1.1" fill="#e8e8e8"/><rect x="297" y="375.48" width="8" height="1.1" fill="#e8e8e8"/><rect x="300" y="385.81" width="5" height="1.1" fill="#e8e8e8"/><rect x="298.5" y="396.14" width="6.5" height="1.1" fill="#e8e8e8"/><rect x="300" y="406.47" width="5" height="1.1" fill="#e8e8e8"/><rect x="286" y="416.70" width="19" height="1.3" fill="#e8e8e8"/><rect x="300" y="427.13" width="5" height="1.1" fill="#e8e8e8"/><rect x="298.5" y="437.46" width="6.5" height="1.1" fill="#e8e8e8"/><rect x="300" y="447.79" width="5" height="1.1" fill="#e8e8e8"/><rect x="297" y="458.12" width="8" height="1.1" fill="#e8e8e8"/><rect x="300" y="468.46" width="5" height="1.1" fill="#e8e8e8"/><rect x="298.5" y="478.79" width="6.5" height="1.1" fill="#e8e8e8"/><rect x="300" y="489.12" width="5" height="1.1" fill="#e8e8e8"/><rect x="295" y="499.45" width="10" height="1.1" fill="#e8e8e8"/><rect x="300" y="509.78" width="5" height="1.1" fill="#e8e8e8"/><rect x="298.5" y="520.11" width="6.5" height="1.1" fill="#e8e8e8"/><rect x="300" y="530.44" width="5" height="1.1" fill="#e8e8e8"/><rect x="297" y="540.78" width="8" height="1.1" fill="#e8e8e8"/><rect x="300" y="551.11" width="5" height="1.1" fill="#e8e8e8"/><rect x="298.5" y="561.44" width="6.5" height="1.1" fill="#e8e8e8"/><rect x="300" y="571.77" width="5" height="1.1" fill="#e8e8e8"/><rect x="286" y="582.00" width="19" height="1.3" fill="#e8e8e8"/><rect x="300" y="592.43" width="5" height="1.1" fill="#e8e8e8"/><rect x="298.5" y="602.76" width="6.5" height="1.1" fill="#e8e8e8"/><rect x="300" y="613.09" width="5" height="1.1" fill="#e8e8e8"/><rect x="297" y="623.42" width="8" height="1.1" fill="#e8e8e8"/><rect x="300" y="633.76" width="5" height="1.1" fill="#e8e8e8"/><rect x="298.5" y="644.09" width="6.5" height="1.1" fill="#e8e8e8"/><rect x="300" y="654.42" width="5" height="1.1" fill="#e8e8e8"/><rect x="295" y="664.75" width="10" height="1.1" fill="#e8e8e8"/><rect x="300" y="675.08" width="5" height="1.1" fill="#e8e8e8"/><rect x="298.5" y="685.41" width="6.5" height="1.1" fill="#e8e8e8"/><rect x="300" y="695.74" width="5" height="1.1" fill="#e8e8e8"/><rect x="297" y="706.08" width="8" height="1.1" fill="#e8e8e8"/><rect x="300" y="716.41" width="5" height="1.1" fill="#e8e8e8"/><rect x="298.5" y="726.74" width="6.5" height="1.1" fill="#e8e8e8"/><rect x="300" y="737.07" width="5" height="1.1" fill="#e8e8e8"/><rect x="286" y="747.30" width="19" height="1.3" fill="#e8e8e8"/><rect x="300" y="757.73" width="5" height="1.1" fill="#e8e8e8"/><rect x="298.5" y="768.06" width="6.5" height="1.1" fill="#e8e8e8"/><rect x="300" y="778.39" width="5" height="1.1" fill="#e8e8e8"/><rect x="297" y="788.73" width="8" height="1.1" fill="#e8e8e8"/><rect x="300" y="799.06" width="5" height="1.1" fill="#e8e8e8"/><rect x="298.5" y="809.39" width="6.5" height="1.1" fill="#e8e8e8"/><rect x="300" y="819.72" width="5" height="1.1" fill="#e8e8e8"/><rect x="295" y="830.05" width="10" height="1.1" fill="#e8e8e8"/><rect x="300" y="840.38" width="5" height="1.1" fill="#e8e8e8"/><rect x="298.5" y="850.71" width="6.5" height="1.1" fill="#e8e8e8"/><rect x="300" y="861.04" width="5" height="1.1" fill="#e8e8e8"/><rect x="297" y="871.38" width="8" height="1.1" fill="#e8e8e8"/><rect x="300" y="881.71" width="5" height="1.1" fill="#e8e8e8"/><rect x="298.5" y="892.04" width="6.5" height="1.1" fill="#e8e8e8"/><rect x="300" y="902.37" width="5" height="1.1" fill="#e8e8e8"/><rect x="286" y="912.60" width="19" height="1.3" fill="#e8e8e8"/><rect x="300" y="923.03" width="5" height="1.1" fill="#e8e8e8"/><rect x="298.5" y="933.36" width="6.5" height="1.1" fill="#e8e8e8"/><rect x="300" y="943.69" width="5" height="1.1" fill="#e8e8e8"/><rect x="297" y="954.03" width="8" height="1.1" fill="#e8e8e8"/><rect x="300" y="964.36" width="5" height="1.1" fill="#e8e8e8"/><text x="286.3" y="265.30" font-size="12.3" font-weight="bold" fill="#fff" font-family="Liberation Sans">0</text><text x="286.3" y="430.60" font-size="12.3" font-weight="bold" fill="#fff" font-family="Liberation Sans">2</text><text x="286.3" y="595.90" font-size="12.3" font-weight="bold" fill="#fff" font-family="Liberation Sans">4</text><text x="286.3" y="761.20" font-size="12.3" font-weight="bold" fill="#fff" font-family="Liberation Sans">6</text><text x="286.3" y="926.50" font-size="12.3" font-weight="bold" fill="#fff" font-family="Liberation Sans">8</text></svg>
<div class="a" style="left:636px;top:960.5px;width:865px;height:10.5px;background:rgba(255,255,255,0.0);border:1.5px solid #d5d7d8;border-radius:6px"></div>
<div class="a" style="left:1853px;top:404px;width:11px;height:365px;background:rgba(255,255,255,0.0);border:1.5px solid #d5d7d8;border-radius:6px"></div>
<!-- p_right -->
<svg style="left:1883px;top:225px;" width="20" height="19" viewBox="0 0 20 19"><path d="M9 1.5 L2 9.5 L9 17.5 M18 1.5 L11 9.5 L18 17.5" fill="none" stroke="#646b74" stroke-width="3" stroke-linecap="round" stroke-linejoin="round"/></svg>
<svg style="left:1881px;top:273.5px;" width="23" height="27" viewBox="0 0 23 27"><path d="M1.4 3 Q1.4 1.4 3 1.4 H15 L21.6 8 V24 Q21.6 25.6 20 25.6 H3 Q1.4 25.6 1.4 24Z" fill="none" stroke="#39404a" stroke-width="2.6" stroke-linejoin="round"/><rect x="5" y="12.2" width="13" height="1.6" fill="#39404a"/><rect x="5" y="17.6" width="13" height="1.6" fill="#39404a"/><rect x="11.5" y="10.5" width="3" height="5" rx="1" fill="#39404a"/><rect x="7.5" y="15.9" width="3" height="5" rx="1" fill="#39404a"/></svg>
<svg style="left:1878.5px;top:341.5px;" width="30" height="23" viewBox="0 0 30 23"><path d="M0 0.3 H29.5 V22.5 H6.5 V6.5Z" fill="#39404a"/><g fill="#fff"><rect x="13" y="7" width="4" height="4.2"/><path d="M15 11 Q15 14.5 12.8 15.5 L13.5 16.2 Q17 15 17 11Z"/><rect x="19" y="7" width="4" height="4.2"/><path d="M21 11 Q21 14.5 18.8 15.5 L19.5 16.2 Q23 15 23 11Z"/></g></svg>
<svg style="left:1879.5px;top:406px;" width="28" height="29" viewBox="0 0 28 29"><rect x="12.5" y="0" width="3" height="3" fill="#39404a"/><rect x="0" y="2.6" width="28" height="2.6" fill="#39404a"/><rect x="1.8" y="4" width="24.4" height="16.5" fill="none" stroke="#39404a" stroke-width="2.6"/><path d="M10.8 8 V17 L18 12.5Z" fill="#39404a"/><path d="M8 20 L5.5 28.5 M20 20 L22.5 28.5 M14 20 V24" stroke="#39404a" stroke-width="2.6"/></svg>
<svg style="left:1880.5px;top:474px;" width="26" height="26" viewBox="0 0 26 26"><circle cx="13" cy="13" r="11.3" fill="none" stroke="#39404a" stroke-width="2.8"/><path d="M12.3 6.5 V14 L16.5 17" fill="none" stroke="#39404a" stroke-width="2.4" stroke-linecap="round"/></svg>
<svg style="left:1881px;top:539.5px;" width="25" height="27" viewBox="0 0 25 27"><g fill="none" stroke="#39404a" stroke-width="2.6" stroke-linejoin="round"><path d="M12.5 1.6 L23.4 7.7 L12.5 13.8 L1.6 7.7Z" fill="#39404a"/><path d="M4.2 12.2 L1.6 13.7 L12.5 19.8 L23.4 13.7 L20.8 12.2"/><path d="M4.2 18.2 L1.6 19.7 L12.5 25.8 L23.4 19.7 L20.8 18.2"/></g></svg>
<svg style="left:1881px;top:606.5px;" width="25" height="27" viewBox="0 0 25 27"><path d="M1.4 1.4 H16 L23.6 9 V25.6 H1.4Z" fill="none" stroke="#39404a" stroke-width="2.6" stroke-linejoin="round"/><path d="M12.5 8.5 Q17.5 14.5 17.5 17 Q17.5 21.5 12.5 21.5 Q7.5 21.5 7.5 17 Q7.5 14.5 12.5 8.5Z" fill="#39404a"/></svg>
<svg style="left:1879px;top:674px;" width="28" height="25" viewBox="0 0 28 25"><path d="M14 1.4 Q26.6 1.4 26.6 10.5 Q26.6 19.6 14 19.6 Q11.5 19.6 9.5 19 L2.5 23.2 L5 16.8 Q1.4 14.3 1.4 10.5 Q1.4 1.4 14 1.4Z" fill="none" stroke="#39404a" stroke-width="2.6" stroke-linejoin="round"/><circle cx="9" cy="10.8" r="1.5" fill="#39404a"/><circle cx="14" cy="10.8" r="1.5" fill="#39404a"/><circle cx="19" cy="10.8" r="1.5" fill="#39404a"/></svg>
<svg style="left:1878.5px;top:739px;" width="31" height="29" viewBox="0 0 31 29"><g fill="#39404a"><ellipse cx="11" cy="4.5" rx="10.5" ry="4.5"/><path d="M0.5 7.5 Q0.5 12 11 12 Q21.5 12 21.5 7.5 V11 Q21.5 15.5 11 15.5 Q0.5 15.5 0.5 11Z"/><path d="M0.5 14 Q0.5 18.5 11 18.5 Q14 18.5 15.5 18 V21.5 Q14 22 11 22 Q0.5 22 0.5 17.5Z"/><path d="M0.5 20.5 Q0.5 25 11 25 Q13 25 14 24.8 V28 Q13 28.5 11 28.5 Q0.5 28.5 0.5 24Z"/></g><g fill="none" stroke="#39404a" stroke-width="2.6"><rect x="14.5" y="19.5" width="9" height="6" rx="3" transform="rotate(-45 19 22.5)"/><rect x="20.5" y="13.5" width="9" height="6" rx="3" transform="rotate(-45 25 16.5)"/></g></svg>
<svg style="left:1878.5px;top:805px;" width="31" height="30" viewBox="0 0 31 30"><g fill="#39404a"><path d="M7 0 L8.6 4.8 L13.5 6.5 L8.6 8.2 L7 13 L5.4 8.2 L0.5 6.5 L5.4 4.8Z"/><path d="M18 2 L19 5 L22 6 L19 7 L18 10 L17 7 L14 6 L17 5Z"/><path d="M4.5 17 L5.4 19.6 L8 20.5 L5.4 21.4 L4.5 24 L3.6 21.4 L1 20.5 L3.6 19.6Z"/><path d="M24.5 11 L25.2 13 L27.2 13.8 L25.2 14.5 L24.5 16.5 L23.8 14.5 L21.8 13.8 L23.8 13Z"/></g><path d="M13 12 L27.5 27" stroke="#39404a" stroke-width="4.6" stroke-linecap="round"/></svg>
<!-- p_bottom -->
<svg style="left:137px;top:982px;" width="28" height="23" viewBox="0 0 28 23"><g fill="#fff"><rect x="0" y="1.2" width="3.6" height="3.6" rx="1"/><rect x="0" y="10.4" width="3.6" height="3.6" rx="1"/><rect x="0" y="19.6" width="3.6" height="3.6" rx="1"/><rect x="7" y="1" width="20.5" height="4" rx="1.5"/><rect x="7" y="10.2" width="20.5" height="4" rx="1.5"/><rect x="7" y="19.4" width="20.5" height="4" rx="1.5"/></g></svg>
<svg style="left:188px;top:981.5px;" width="25" height="24" viewBox="0 0 25 24"><g fill="#fff"><rect x="0" y="0" width="10.8" height="10.8" rx="1"/><rect x="13.2" y="0" width="10.8" height="10.8" rx="1"/><rect x="0" y="13.2" width="10.8" height="10.8" rx="1"/><rect x="13.2" y="13.2" width="10.8" height="10.8" rx="1"/></g></svg>
<div class="a" style="left:231px;top:972px;width:90px;height:36.5px;background:#3b414b;border-radius:0 0 5px 5px"></div>
<div class="t" style="left:242.84px;top:983.14px;font-size:18.5px;color:#fff;transform:scaleX(0.9853);transform-origin:left top;">Home</div>
<svg style="left:296.5px;top:985.5px;" width="11" height="8" viewBox="0 0 11 8"><path d="M0 0H11L5.5 8Z" fill="#fff"/></svg>
<div class="a" style="left:327px;top:972px;width:104px;height:35px;background:#59606a;border-radius:0 0 5px 5px"></div>
<div class="t" style="left:338.37px;top:983.14px;font-size:18.5px;color:#c9cdd2;transform:scaleX(1.0373);transform-origin:left top;">Individual</div>
<div class="a" style="left:437px;top:972px;width:70px;height:35px;background:#59606a;border-radius:0 0 5px 5px"></div>
<div class="t" style="left:450.65px;top:983.14px;font-size:18.5px;color:#c9cdd2;transform:scaleX(0.9437);transform-origin:left top;">Team</div>
<div class="a" style="left:512px;top:972px;width:106px;height:35px;background:#59606a;border-radius:0 0 5px 5px"></div>
<div class="t" style="left:523.55px;top:983.14px;font-size:18.5px;color:#c9cdd2;transform:scaleX(0.9786);transform-origin:left top;">Enterprise</div>
<svg style="left:637.5px;top:981px;" width="25" height="25" viewBox="0 0 25 25"><circle cx="12.2" cy="12.2" r="10.8" fill="none" stroke="#fff" stroke-width="2.6"/><path d="M12.2 6.5 V18 M6.5 12.2 H18" stroke="#fff" stroke-width="2.8"/></svg>
<div class="a" style="left:1524px;top:979px;width:1.5px;height:30px;background:#3e444d;"></div>
<svg style="left:1541px;top:981px;" width="25" height="25" viewBox="0 0 25 25"><circle cx="12.2" cy="12.2" r="10.8" fill="none" stroke="#fff" stroke-width="2.4"/><path d="M12.2 5.5 L17 17.5 L12.2 15 L7.4 17.5Z" fill="#fff"/></svg>
<div class="a" style="left:1586.5px;top:991.5px;width:19px;height:3px;background:#fff;"></div>
<div class="a" style="left:1621px;top:990.5px;width:186px;height:6.5px;background:#9aa0a5;border-radius:3.5px"></div>
<svg style="left:1664px;top:985.5px;" width="16" height="16" viewBox="0 0 16 16"><circle cx="8" cy="8" r="7.9" fill="#3d8bf4"/></svg>
<svg style="left:1822.5px;top:984.5px;" width="19" height="19" viewBox="0 0 19 19"><path d="M9.5 0 V19 M0 9.5 H19" stroke="#fff" stroke-width="2.8"/></svg>
<div class="t" style="left:1849.77px;top:985.19px;font-size:17.5px;color:#fff;transform:scaleX(1.039);transform-origin:left top;">39%</div>
<svg style="left:1893.5px;top:989.5px;" width="10.5" height="8" viewBox="0 0 10.5 8"><path d="M0 0H10.5L5.25 8Z" fill="#fff"/></svg>
<!-- p_page -->
<div class="a" style="left:631px;top:252px;width:910px;height:703px;background:#fff;box-shadow:0 0 10px 2px rgba(0,0,0,.18)"></div>
<div class="a" style="left:631px;top:252px;width:233px;height:703px;background:linear-gradient(#e2bfd0 0%,#dcb4c8 7%,#d0a6bd 21%,#cba0b8 27%,#c49db4 35%,#b99bb0 44%,#b8a1b2 55%,#b2a8b2 67%,#aaa8ac 78%,#a3a5a7 89%,#9ca2a3 100%);"></div>
<div class="a" style="left:631px;top:307px;width:60px;height:648px;background:linear-gradient(#b06c91 0%,#a05a82 14%,#985880 22%,#7a4568 28%,#5a2f52 35%,#512b4a 43%,#3a2a3c 58%,#28222c 72%,#1a1a1e 87%,#111416 100%);"></div>
<svg style="left:644px;top:265px;" width="34" height="30" viewBox="0 0 34 30"><path d="M17.8 1 L33.6 15.8 H29.3 V28.8 H23.3 V19 H11.5 V28.8 H5.5 V15.8 H1 Z" fill="#fff"/><rect x="24.8" y="3" width="4" height="8" fill="#fff"/></svg>
<div class="t" style="left:635.00px;top:317.80px;font-size:7.56px;color:#f5e9f0;letter-spacing:1.308px;">INDIVIDUAL</div>
<svg style="left:654.5px;top:331px;" width="15" height="16" viewBox="0 0 15 16"><circle cx="7.6" cy="4.6" r="4.2" fill="#fff"/><path d="M0.4 15.6 Q0.4 9.2 7.6 9.2 Q14.8 9.2 14.8 15.6Z" fill="#fff"/></svg>
<div class="t" style="left:650.00px;top:367.05px;font-size:7.85px;color:#f5e9f0;letter-spacing:0.964px;">TEAM</div>
<svg style="left:640px;top:380px;" width="43" height="25" viewBox="0 0 43 25"><circle cx="21.8" cy="5.2" r="4.1" fill="#fff"/><path d="M14.5 16.5 Q14.5 9.5 21.8 9.5 Q29.1 9.5 29.1 16.5Z" fill="#fff"/><circle cx="8.9" cy="12.3" r="4.1" fill="#fff"/><path d="M1.6 23.6 Q1.6 16.6 8.9 16.6 Q16.2 16.6 16.2 23.6Z" fill="#fff"/><circle cx="35.3" cy="12.3" r="4.1" fill="#fff"/><path d="M28.0 23.6 Q28.0 16.6 35.3 16.6 Q42.6 16.6 42.6 23.6Z" fill="#fff"/></svg>
<div class="t" style="left:637.00px;top:426.84px;font-size:6.69px;color:#f5e9f0;letter-spacing:0.883px;">ENTERPRISE</div>
<svg style="left:655px;top:439px;" width="15" height="26" viewBox="0 0 15 26"><rect x="0" y="0" width="8" height="26" fill="#fff"/><rect x="1.0" y="2.0" width="1.2" height="1.8" fill="#a05c84"/><rect x="3.3" y="2.0" width="1.2" height="1.8" fill="#a05c84"/><rect x="5.6" y="2.0" width="1.2" height="1.8" fill="#a05c84"/><rect x="1.0" y="5.6" width="1.2" height="1.8" fill="#a05c84"/><rect x="3.3" y="5.6" width="1.2" height="1.8" fill="#a05c84"/><rect x="5.6" y="5.6" width="1.2" height="1.8" fill="#a05c84"/><rect x="1.0" y="9.2" width="1.2" height="1.8" fill="#a05c84"/><rect x="3.3" y="9.2" width="1.2" height="1.8" fill="#a05c84"/><rect x="5.6" y="9.2" width="1.2" height="1.8" fill="#a05c84"/><rect x="1.0" y="12.8" width="1.2" height="1.8" fill="#a05c84"/><rect x="3.3" y="12.8" width="1.2" height="1.8" fill="#a05c84"/><rect x="5.6" y="12.8" width="1.2" height="1.8" fill="#a05c84"/><rect x="1.0" y="16.4" width="1.2" height="1.8" fill="#a05c84"/><rect x="3.3" y="16.4" width="1.2" height="1.8" fill="#a05c84"/><rect x="5.6" y="16.4" width="1.2" height="1.8" fill="#a05c84"/><rect x="1.0" y="20.0" width="1.2" height="1.8" fill="#a05c84"/><rect x="3.3" y="20.0" width="1.2" height="1.8" fill="#a05c84"/><rect x="5.6" y="20.0" width="1.2" height="1.8" fill="#a05c84"/><path d="M8.5 26 V9 L10 7 V3 L11 1 L12 3 V7 L14 9 V26Z" fill="#fff"/><rect x="10" y="12" width="1.3" height="1.8" fill="#a05c84"/><rect x="10" y="17" width="1.3" height="1.8" fill="#a05c84"/><rect x="12" y="21" width="1.3" height="1.8" fill="#a05c84"/></svg>
<div class="a" style="left:710px;top:268px;width:136.6px;height:136.2px;background:transparent;border:3px solid #fff;border-radius:9px"></div>
<svg style="left:764px;top:288px;" width="62" height="117" viewBox="0 0 62 117"><path d="M19 116 V63 H1.2 V43 H19 V30 Q19 1.2 46 1.2 H60.8 V21.5 H48.5 Q40 21.5 40 30 V43 H59.5 L57 63 H40 V116Z" fill="#fff"/></svg>
<div class="t" style="left:712.00px;top:427.90px;font-size:14.53px;color:#3b2d38;letter-spacing:3.215px;">SUMMARY</div>
<div class="a" style="left:783.6px;top:461.6px;width:1.5px;height:40.2px;background:#3e3339;"></div>
<div class="a" style="left:712px;top:501px;width:134.8px;height:1.6px;background:#3e3339;"></div>
<div class="t" style="left:731.50px;top:474.62px;font-size:12.5px;color:#2e262b;transform:scaleX(0.937);transform-origin:left top;">June</div>
<div class="t" style="left:807.50px;top:474.62px;font-size:12.5px;color:#2e262b;transform:scaleX(0.9278);transform-origin:left top;">14</div>
<div class="t" style="left:714.60px;top:529.45px;font-size:9.16px;color:#332a31;letter-spacing:1.461px;">COMPANY</div>
<div class="a" style="left:711.6px;top:549.2px;width:135.2px;height:1.6px;background:#3e3339;"></div>
<div class="t" style="left:714.60px;top:562.89px;font-size:12.3px;color:#2a2428;transform:scaleX(0.933);transform-origin:left top;">Facebook</div>
<div class="t" style="left:714.60px;top:629.45px;font-size:9.16px;color:#332a31;letter-spacing:1.575px;">COMPANY SIZE</div>
<div class="a" style="left:711.6px;top:648.5px;width:135.2px;height:1.6px;background:#3e3339;"></div>
<div class="t" style="left:714.60px;top:662.19px;font-size:12.3px;color:#2a2428;transform:scaleX(0.9197);transform-origin:left top;">27,501</div>
<div class="t" style="left:712.40px;top:713.39px;font-size:8.87px;color:#332a31;letter-spacing:1.616px;">TARGET DEPARTMENTS</div>
<div class="a" style="left:711.6px;top:733px;width:135.2px;height:1.6px;background:#3e3339;"></div>
<div class="t" style="left:714.20px;top:743.98px;font-size:10.3px;color:#2a2428;">HR</div>
<div class="a" style="left:712.4px;top:758.6999999999999px;width:134.4px;height:1.5px;background:#3e3339;"></div>
<div class="t" style="left:714.20px;top:768.48px;font-size:10.3px;color:#2a2428;">IT</div>
<div class="a" style="left:712.4px;top:783.5999999999999px;width:134.4px;height:1.5px;background:#3e3339;"></div>
<div class="t" style="left:714.20px;top:793.68px;font-size:10.3px;color:#2a2428;">Sales</div>
<div class="a" style="left:712.4px;top:808.8px;width:134.4px;height:1.5px;background:#3e3339;"></div>
<div class="t" style="left:714.20px;top:817.88px;font-size:10.3px;color:#2a2428;">Marketing</div>
<div class="a" style="left:712.4px;top:833.9px;width:134.4px;height:1.5px;background:#3e3339;"></div>
<div class="t" style="left:714.20px;top:842.08px;font-size:10.3px;color:#2a2428;">Customer Success</div>
<div class="a" style="left:712.4px;top:859.5px;width:134.4px;height:1.5px;background:#3e3339;"></div>
<div class="t" style="left:714.20px;top:868.28px;font-size:10.3px;color:#2a2428;">Engineering</div>
<div class="a" style="left:712.4px;top:884.3px;width:134.4px;height:1.5px;background:#3e3339;"></div>
<div class="a" style="left:864px;top:252px;width:677px;height:205px;overflow:hidden;background:
radial-gradient(ellipse 25px 18px at 592px 72px,rgba(255,215,215,.85),rgba(255,215,215,0)),
radial-gradient(ellipse 60px 40px at 590px 78px,rgba(225,150,160,.7),rgba(225,150,160,0)),
radial-gradient(ellipse 80px 35px at 400px 60px,rgba(200,115,160,.6),rgba(200,115,160,0)),
radial-gradient(ellipse 100px 50px at 470px 40px,rgba(150,80,125,.6),rgba(150,80,125,0)),
radial-gradient(ellipse 120px 45px at 560px 130px,rgba(170,110,140,.55),rgba(170,110,140,0)),
radial-gradient(ellipse 140px 45px at 330px 125px,rgba(150,100,135,.55),rgba(150,100,135,0)),
radial-gradient(ellipse 160px 50px at 520px 15px,rgba(120,60,105,.7),rgba(120,60,105,0)),
radial-gradient(ellipse 280px 130px at 470px 85px,rgba(120,65,105,.75),rgba(120,65,105,0)),
radial-gradient(ellipse 320px 70px at 280px 150px,rgba(110,80,105,.45),rgba(110,80,105,0)),
linear-gradient(#121418 0%,#15161a 38%,#252529 50%,#3d3c41 62%,#58575c 75%,#8a898d 88%,#d0d0d0 100%)">
<svg style="left:0;top:0" width="677" height="205" viewBox="0 0 677 205">
<defs>
<filter id="cl" x="0" y="0" width="100%" height="100%"><feTurbulence type="fractalNoise" baseFrequency="0.018 0.04" numOctaves="4" seed="7"/><feColorMatrix type="matrix" values="0 0 0 0 0.16  0 0 0 0 0.1  0 0 0 0 0.15  0 0 0 -4 2.1"/></filter>
<filter id="cl2" x="0" y="0" width="100%" height="100%"><feTurbulence type="fractalNoise" baseFrequency="0.02 0.05" numOctaves="3" seed="11"/><feColorMatrix type="matrix" values="0 0 0 0 0.82  0 0 0 0 0.48  0 0 0 0 0.64  0 0 0 3.2 -1.5"/></filter>
<radialGradient id="cm" cx="0.72" cy="0.42" r="0.42" gradientTransform="translate(0.72 0.42) scale(1 1.5) translate(-0.72 -0.42)"><stop offset="0" stop-color="#fff" stop-opacity="1"/><stop offset="0.6" stop-color="#fff" stop-opacity=".8"/><stop offset="1" stop-color="#fff" stop-opacity="0"/></radialGradient>
<mask id="mk"><rect width="677" height="205" fill="url(#cm)"/></mask>
<linearGradient id="wf" x1="0" y1="0" x2="0" y2="1"><stop offset="0" stop-color="#fff" stop-opacity="0"/><stop offset="0.6" stop-color="#fff" stop-opacity="0"/><stop offset="0.7" stop-color="#fff" stop-opacity=".15"/><stop offset="0.8" stop-color="#fff" stop-opacity=".36"/><stop offset="0.88" stop-color="#fff" stop-opacity=".62"/><stop offset="0.95" stop-color="#fff" stop-opacity=".9"/><stop offset="1" stop-color="#fff" stop-opacity="1"/></linearGradient>
</defs>
<g mask="url(#mk)"><rect width="677" height="205" filter="url(#cl)" opacity="1"/><rect width="677" height="205" filter="url(#cl2)" opacity=".7"/></g>
<rect width="677" height="205" fill="url(#wf)"/>
<g fill="none" stroke="#fff" stroke-linejoin="round" transform="translate(-864 -252)">
<path d="M1320 267.7 L1330 278 L1341 285 L1344.5 294.3 L1341 313 L1337.5 333.7 L1301.6 352.3 L1308.6 363.9 L1312 375.5 L1306 393" stroke-width="1.5"/>
<path d="M1341 285 L1350.3 271.2 L1357 266 L1354 258 L1358 252 M1357 266 L1366 262 L1374 255 L1386 253 L1396 254 L1401 252 M1360 276 L1368 270 L1382 264 L1392 258" stroke-width="1.3"/>
<path d="M1345.6 303.6 L1364.2 295.5 L1389.7 297.8 L1410.5 296.7 L1433.7 282.8" stroke-width="1.2"/>
<path d="M1146.3 355.8 L1164.9 359.2 L1169.5 357 L1188 367.4" stroke-width="1.3" stroke="#f4e4ee"/>
<path d="M1438.4 324.5 L1450 312.9 L1461.5 319.8 L1470.8 329.1" stroke-width="1.6" stroke="#fff5f5"/>
</g></svg></div>
<div class="t" style="left:881.13px;top:262.96px;font-size:37.5px;color:#f2f2f2;transform:scaleX(0.857);transform-origin:left top;-webkit-text-stroke:1.25px #16171b;">LIGHTNING SOFTWARE</div>
<div class="t" style="left:883.60px;top:309.68px;font-size:13.37px;color:#ececec;letter-spacing:2.879px;">EMAIL CAMPAIGN</div>
<div class="t" style="left:898.30px;top:466.56px;font-size:15.99px;color:#4a4a4c;letter-spacing:4.296px;">EMAILS SENT</div>
<div class="t" style="left:1115.20px;top:468.46px;font-size:15.99px;color:#4a4a4c;letter-spacing:4.471px;">DAYS RUNNING</div>
<div class="t" style="left:1336.80px;top:466.46px;font-size:15.99px;color:#4a4a4c;letter-spacing:4.373px;">EMAILS OPENED</div>
<div class="t" style="left:926.24px;top:515.44px;font-size:40px;color:#4a4a4c;transform:scaleX(1.0361);transform-origin:left top;">5956</div>
<div class="t" style="left:1176.24px;top:511.64px;font-size:40px;color:#4a4a4c;transform:scaleX(1.0854);transform-origin:left top;">13</div>
<div class="t" style="left:1380.32px;top:511.64px;font-size:40px;color:#4a4a4c;transform:scaleX(1.0523);transform-origin:left top;">3530</div>
<svg style="left:935.8px;top:584.9px;" width="75" height="48" viewBox="0 0 75 48"><rect x="2.5" y="2.5" width="69.4" height="42.9" fill="none" stroke="#5b2d51" stroke-width="5"/><path d="M5 3.5 L37.2 28.8 L69.4 3.5 M5 43.5 L31.5 25 M69.4 43.5 L43 25" fill="none" stroke="#5b2d51" stroke-width="4.6"/></svg>
<svg style="left:1160px;top:570px;" width="80" height="70" viewBox="0 0 80 70"><path d="M1180.8 603.5 A22.5 22.5 0 1 1 1182.5 618.8" fill="none" stroke="#5b2d51" stroke-width="4.2" transform="translate(-1160 -570)"/><path d="M1172 603.4 H1185.6 L1178.8 611.8Z" fill="#5b2d51" transform="translate(-1160 -570)"/><path d="M1202.1 591.5 V607.9 L1213.1 614.6" fill="none" stroke="#5b2d51" stroke-width="2.4" transform="translate(-1160 -570)"/></svg>
<svg style="left:1393.4px;top:572px;" width="68" height="58" viewBox="0 0 68 58"><path d="M2.3 55.6 V22 L33.7 2.6 L65.2 22 V55.6Z" fill="none" stroke="#5b2d51" stroke-width="3.8" stroke-linejoin="miter"/><path d="M2.3 22 L24 39 M65.2 22 L43.5 39 M2.3 55.6 L33.7 33.5 L65.2 55.6" fill="none" stroke="#5b2d51" stroke-width="3.8"/></svg>
<div class="t" style="left:1107.20px;top:666.76px;font-size:15.41px;color:#333;letter-spacing:2.645px;">LEADS GENERATED</div>
<div class="t" style="left:996.00px;top:711.43px;font-size:9.3px;color:#8a8a8a;transform:translateX(-50%);transform-origin:center top;">T - 4</div>
<div class="t" style="left:996.00px;top:729.02px;font-size:13.8px;color:#8a8a8a;transform:translateX(-50%);transform-origin:center top;">54%</div>
<div class="t" style="left:1098.00px;top:711.43px;font-size:9.3px;color:#8a8a8a;transform:translateX(-50%);transform-origin:center top;">T - 3</div>
<div class="t" style="left:1098.00px;top:729.02px;font-size:13.8px;color:#8a8a8a;transform:translateX(-50%);transform-origin:center top;">75%</div>
<div class="t" style="left:1200.00px;top:711.43px;font-size:9.3px;color:#8a8a8a;transform:translateX(-50%);transform-origin:center top;">T - 2</div>
<div class="t" style="left:1200.00px;top:729.02px;font-size:13.8px;color:#8a8a8a;transform:translateX(-50%);transform-origin:center top;">67%</div>
<div class="t" style="left:1302.00px;top:711.43px;font-size:9.3px;color:#8a8a8a;transform:translateX(-50%);transform-origin:center top;">T - 1</div>
<div class="t" style="left:1302.00px;top:729.02px;font-size:13.8px;color:#8a8a8a;transform:translateX(-50%);transform-origin:center top;">85%</div>
<div class="t" style="left:1404.00px;top:711.43px;font-size:9.3px;color:#8a8a8a;transform:translateX(-50%);transform-origin:center top;">TODAY</div>
<div class="t" style="left:1404.00px;top:729.02px;font-size:13.8px;color:#8a8a8a;transform:translateX(-50%);transform-origin:center top;">89%</div>
<div class="a" style="left:945px;top:838.7px;width:102.5px;height:108.29999999999995px;background:#e6b0b2;"></div>
<div class="a" style="left:1047px;top:797.5px;width:102.5px;height:149.5px;background:#c37f9c;"></div>
<div class="a" style="left:1149px;top:813.2px;width:102.5px;height:133.79999999999995px;background:#9c5579;"></div>
<div class="a" style="left:1251px;top:778.2px;width:102.5px;height:168.79999999999995px;background:#5a2a50;"></div>
<div class="a" style="left:1353px;top:770.2px;width:102px;height:176.79999999999995px;background:#2f2233;"></div>
<div class="a" style="left:945px;top:944.5px;width:510px;height:10.5px;background:#5e636b;"></div>
</body></html>
